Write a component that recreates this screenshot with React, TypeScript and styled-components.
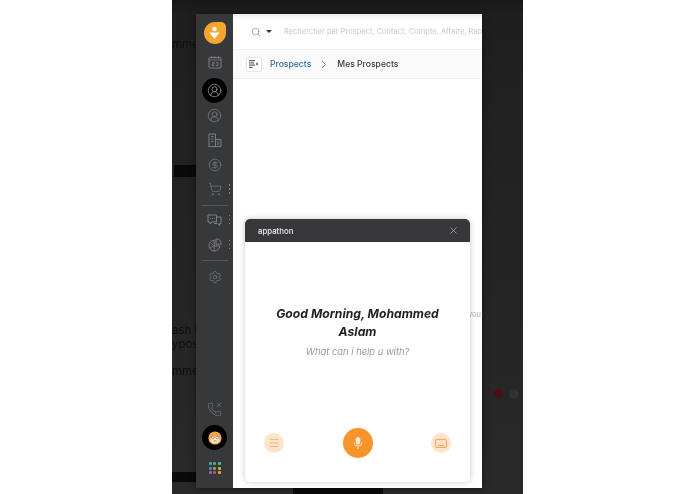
import styled, { createGlobalStyle } from "styled-components";
import { CircleDollarSign, CircleUserRound, Menu, PhoneMissed, Search, Settings, ShoppingCart, X } from "lucide-react";

const GlobalStyle = createGlobalStyle`
  html, body {
    margin: 0;
    height: 100%;
    background: #fff;
    font-family: Inter, "Liberation Sans", sans-serif;
    overflow: hidden;
  }
`;

const dots = ["#4fa3a5", "#4fa3a5", "#57b39a", "#3f86b8", "#5fae6b", "#e0a832", "#a05fb0", "#d0524f", "#e0a832"];

const App = () => {
  return (
    <Page>
      <GlobalStyle />
      <Stage>
        <Backdrop>
          <Ghost $top={37} $left={0}>mme</Ghost>
          <GhostBar $top={165} $left={2} $width={22} $height={12} />
          <Ghost $top={323} $left={0}>ash L</Ghost>
          <Ghost $top={337} $left={0}>ypost</Ghost>
          <Ghost $top={364} $left={0}>mme</Ghost>
          <GhostBar $top={472} $left={0} $width={24} $height={10} />
          <GhostBar $top={488} $left={121} $width={90} $height={6} />
          <GhostDot $top={389} $left={322} $size={9} $color="#4a1014" />
          <GhostDot $top={389} $left={337} $size={10} $color="#303431" />
          <GhostDot $top={387} $left={316} $size={4} $color="#3d1c1d" />
        </Backdrop>
        <Window>
          <Sidebar>
            <Logo>
              <svg width="13" height="14" viewBox="0 0 13 14">
                <circle cx="6.5" cy="3" r="2.2" fill="#fff" />
                <path d="M1.5 6.6h10L6.5 13z" fill="#fff" />
              </svg>
            </Logo>
            <Nav $mt={6}>
              <svg width="14" height="14" viewBox="0 0 14 14" fill="none" stroke="currentColor" strokeWidth="1">
                <rect x="1" y="2.5" width="12" height="10.5" rx="1" />
                <path d="M1 5h12M3.5 1v2.5M7 1v2.5M10.5 1v2.5M4 7.5h2.3v1.4H4v1.6h2.3M8 7.5h2v3H8" strokeWidth="0.8" />
              </svg>
            </Nav>
            <ActiveNav $mt={3}>
              <CircleUserRound size={15} strokeWidth={1.2} />
            </ActiveNav>
            <Nav>
              <CircleUserRound size={15} strokeWidth={1.2} />
            </Nav>
            <Nav>
              <svg width="14" height="14" viewBox="0 0 14 14" fill="none" stroke="currentColor" strokeWidth="1">
                <path d="M1 13.5V1h6.5v12.5M7.5 6.5h5.5v7H.5" />
                <path d="M3 3.5h2.5M3 6h2.5M3 8.5h2.5M9 9h2.5M9 11h2.5" strokeWidth="0.9" />
              </svg>
            </Nav>
            <Nav>
              <CircleDollarSign size={14} strokeWidth={1.2} />
            </Nav>
            <Nav>
              <ShoppingCart size={14} strokeWidth={1.2} />
              <More />
            </Nav>
            <Divider />
            <Nav>
              <svg width="15" height="14" viewBox="0 0 15 14" fill="none" stroke="currentColor" strokeWidth="1">
                <path d="M1 2h8.5v7H5L3 11V9H1z" />
                <path d="M10 4h4v6.5h-1.5V12.5l-2-2H7" />
                <path d="M3 5.5h.8M5 5.5h.8M7 5.5h.8" strokeWidth="1.1" />
              </svg>
              <More />
            </Nav>
            <Nav>
              <svg width="14" height="14" viewBox="0 0 14 14" fill="none" stroke="currentColor" strokeWidth="1">
                <path d="M6.2 2.2a5.4 5.4 0 1 0 5.6 5.8H6.2z" />
                <path d="M6.2 8L2.4 4.4M6.2 8l-4.6 1.8M6.2 8l.2 5" strokeWidth="0.8" />
                <path d="M8 .8a5 5 0 0 1 5.2 5.4H8z" />
              </svg>
              <More />
            </Nav>
            <Divider />
            <Nav $mt={1}>
              <Settings size={14} strokeWidth={1.2} />
            </Nav>
            <Spacer />
            <Nav>
              <PhoneMissed size={15} strokeWidth={1.1} />
            </Nav>
            <AvatarRing>
              <svg width="16" height="16" viewBox="0 0 16 16">
                <circle cx="8" cy="8" r="6.6" fill="#f5a64a" />
                <ellipse cx="8" cy="10" rx="4.6" ry="3.4" fill="#f8e3c8" />
                <circle cx="5.8" cy="7.4" r="1.3" fill="#fff" stroke="#7a4a1a" strokeWidth="0.5" />
                <circle cx="10.2" cy="7.4" r="1.3" fill="#fff" stroke="#7a4a1a" strokeWidth="0.5" />
                <path d="M6.5 11h3" stroke="#a0622a" strokeWidth="0.7" />
              </svg>
            </AvatarRing>
            <AppGrid>
              {dots.map((color, i) => (
                <AppDot key={i} style={{ background: color }} />
              ))}
            </AppGrid>
          </Sidebar>
          <Main>
            <SearchBar>
              <SearchIcon size={10} strokeWidth={1.6} color="#808080" />
              <Caret />
              <SearchText>Rechercher par Prospect, Contact, Compte, Affaire, Rap</SearchText>
            </SearchBar>
            <Crumbs>
              <ListButton>
                <svg width="10" height="8" viewBox="0 0 10 8">
                  <path d="M0 .7h6M0 2.9h5M0 5.1h6M0 7.3h3.5" stroke="#444" strokeWidth="1" />
                  <path d="M7.4 2.6L9.6 4 7.4 5.4z" fill="#444" />
                </svg>
              </ListButton>
              <CrumbLink>Prospects</CrumbLink>
              <CrumbSep>
                <svg width="6" height="9" viewBox="0 0 6 9">
                  <path d="M1 1l3.5 3.5L1 8" fill="none" stroke="#777" strokeWidth="0.9" />
                </svg>
              </CrumbSep>
              <CrumbCurrent>Mes Prospects</CrumbCurrent>
            </Crumbs>
            <Content>
              <StrayText>vou</StrayText>
            </Content>
            <Assistant>
              <AssistantHead>
                <AssistantTitle>appathon</AssistantTitle>
                <X size={11} strokeWidth={1.4} color="#c9c9c9" />
              </AssistantHead>
              <AssistantBody>
                <Greeting>Good Morning, Mohammed Aslam</Greeting>
                <Prompt>What can i help u with?</Prompt>
              </AssistantBody>
              <Actions>
                <SoftAction>
                  <Menu size={12} strokeWidth={1.2} />
                </SoftAction>
                <MicAction>
                  <svg width="10" height="14" viewBox="0 0 10 14">
                    <rect x="2.8" y="1" width="4.4" height="7.6" rx="2.2" fill="#fde8d0" />
                    <path d="M1.2 6.4a3.8 3.8 0 0 0 7.6 0M5 10.2V13" fill="none" stroke="#fde8d0" strokeWidth="1" />
                  </svg>
                </MicAction>
                <SoftAction>
                  <svg width="12" height="9" viewBox="0 0 12 9" fill="none" stroke="currentColor" strokeWidth="0.9">
                    <rect x="0.6" y="0.6" width="10.8" height="7.8" rx="0.8" />
                    <path d="M3 6.4h6" />
                  </svg>
                </SoftAction>
              </Actions>
            </Assistant>
          </Main>
        </Window>
      </Stage>
    </Page>
  );
};

const Page = styled.div`
  display: flex;
  width: 695px;
  height: 494px;
  padding-left: 172px;
  box-sizing: border-box;
  background: #fff;
  filter: blur(0.45px);
`;

const Stage = styled.div`
  position: relative;
  display: flex;
  width: 351px;
  height: 494px;
  padding: 14px 41px 6px 24px;
  box-sizing: border-box;
  background: linear-gradient(#181818 0, #1f1f1f 14px, #292929 100%);
`;

const Backdrop = styled.div`
  position: absolute;
  inset: 0;
`;

const Ghost = styled.div<{ $top: number; $left: number }>`
  position: absolute;
  top: ${(p) => p.$top}px;
  left: ${(p) => p.$left}px;
  font-size: 11.5px;
  line-height: 14px;
  white-space: nowrap;
  color: #0e0e0e;
`;

const GhostBar = styled.div<{ $top: number; $left: number; $width: number; $height: number }>`
  position: absolute;
  top: ${(p) => p.$top}px;
  left: ${(p) => p.$left}px;
  width: ${(p) => p.$width}px;
  height: ${(p) => p.$height}px;
  background: #0a0a0a;
`;

const GhostDot = styled.div<{ $top: number; $left: number; $size: number; $color: string }>`
  position: absolute;
  top: ${(p) => p.$top}px;
  left: ${(p) => p.$left}px;
  width: ${(p) => p.$size}px;
  height: ${(p) => p.$size}px;
  border-radius: 50%;
  background: ${(p) => p.$color};
`;

const Window = styled.div`
  position: relative;
  display: flex;
  width: 286px;
  height: 474px;
  box-shadow: 0 0 6px rgba(0, 0, 0, 0.5);
`;

const Sidebar = styled.div`
  display: flex;
  flex-direction: column;
  align-items: center;
  width: 37px;
  padding: 8px 0 14px;
  box-sizing: border-box;
  background: #37383a;
  color: #7d7d7d;
`;

const Logo = styled.div`
  display: flex;
  align-items: center;
  justify-content: center;
  flex: none;
  width: 22px;
  height: 22px;
  border-radius: 50% 5px 50% 50%;
  background: #f6a52e;
`;

const Nav = styled.div<{ $mt?: number }>`
  position: relative;
  display: flex;
  align-items: center;
  justify-content: center;
  flex: none;
  width: 100%;
  height: 24.75px;
  margin-top: ${(p) => p.$mt || 0}px;
`;

const ActiveNav = styled(Nav)`
  width: 25px;
  height: 25px;
  border-radius: 50%;
  background: #000;
  color: #a0a0a0;
`;

const More = styled.span`
  position: absolute;
  top: 7px;
  right: 3px;
  width: 1.5px;
  height: 1.5px;
  background: #8a8a8a;
  box-shadow: 0 4px 0 #8a8a8a, 0 8px 0 #8a8a8a;
`;

const Divider = styled.div`
  flex: none;
  width: 26px;
  height: 1px;
  margin: 3px 0 2px;
  background: #56575a;
`;

const Spacer = styled.div`
  flex: 1;
`;

const AvatarRing = styled.div`
  display: flex;
  align-items: center;
  justify-content: center;
  flex: none;
  width: 25px;
  height: 25px;
  margin-top: 3px;
  border-radius: 50%;
  background: #000;
`;

const AppGrid = styled.div`
  display: grid;
  flex: none;
  grid-template-columns: repeat(3, 3px);
  gap: 1.5px;
  margin-top: 12px;
`;

const AppDot = styled.span`
  width: 3px;
  height: 3px;
  border-radius: 1px;
`;

const Main = styled.div`
  position: relative;
  display: flex;
  flex: 1;
  flex-direction: column;
  min-width: 0;
  background: #fff;
`;

const SearchBar = styled.div`
  display: flex;
  align-items: center;
  flex: none;
  height: 36px;
  padding: 0 0 0 18px;
  background: linear-gradient(#ececec 0, #fff 6px);
  border-bottom: 1px solid #f2f2f2;
  box-sizing: border-box;
`;

const SearchIcon = styled(Search)`
  flex: none;
`;

const Caret = styled.span`
  flex: none;
  width: 0;
  height: 0;
  margin-left: 5px;
  border: 3px solid transparent;
  border-top: 3.5px solid #333;
  border-bottom: 0;
`;

const SearchText = styled.span`
  flex: none;
  margin-left: 12px;
  font-size: 7.5px;
  color: #c8c8c8;
  white-space: nowrap;
`;

const Crumbs = styled.div`
  display: flex;
  align-items: center;
  flex: none;
  height: 29px;
  padding-left: 13px;
  box-sizing: border-box;
  background: #fafafa;
  border-bottom: 1px solid #f1f1f1;
`;

const ListButton = styled.div`
  display: flex;
  align-items: center;
  justify-content: center;
  width: 16px;
  height: 15px;
  margin-right: 8px;
  background: #fff;
  border: 1px solid #e6e6e6;
  border-radius: 2px;
  box-sizing: border-box;
`;

const CrumbLink = styled.span`
  font-size: 8.6px;
  font-weight: 500;
  color: #2e6f9e;
`;

const CrumbSep = styled.span`
  display: flex;
  margin: 0 10px;
`;

const CrumbCurrent = styled.span`
  font-size: 8.6px;
  font-weight: 500;
  color: #3a3a3a;
`;

const Content = styled.div`
  display: flex;
  flex: 1;
  justify-content: flex-end;
  padding: 231px 1px 0 0;
`;

const StrayText = styled.span`
  font-size: 7.5px;
  color: #aaa;
`;

const Assistant = styled.div`
  position: absolute;
  top: 205px;
  left: 12px;
  display: flex;
  flex-direction: column;
  width: 225px;
  height: 263px;
  border-radius: 5px;
  background: #fff;
  box-shadow: 0 0 6px rgba(0, 0, 0, 0.22);
`;

const AssistantHead = styled.div`
  display: flex;
  align-items: center;
  justify-content: space-between;
  flex: none;
  height: 23px;
  padding: 0 11px 0 13px;
  border-radius: 5px 5px 0 0;
  background: #38383a;
`;

const AssistantTitle = styled.span`
  font-size: 7.8px;
  font-weight: 500;
  color: #f0f0f0;
`;

const AssistantBody = styled.div`
  display: flex;
  flex-direction: column;
  align-items: center;
  flex: 1;
  padding: 62px 20px 0;
  text-align: center;
`;

const Greeting = styled.h2`
  margin: 0;
  padding-top: 1px;
  font-size: 12.2px;
  font-weight: 700;
  font-style: italic;
  line-height: 18px;
  color: #222;
`;

const Prompt = styled.p`
  margin: 4px 0 0;
  font-size: 9.4px;
  font-style: italic;
  line-height: 14px;
  color: #9a9a9a;
`;

const Actions = styled.div`
  display: flex;
  align-items: center;
  justify-content: space-between;
  flex: none;
  height: 30px;
  margin-bottom: 24px;
  padding: 0 19px;
`;

const SoftAction = styled.div`
  display: flex;
  align-items: center;
  justify-content: center;
  width: 20px;
  height: 20px;
  border-radius: 50%;
  background: #fde4cb;
  color: #f19a44;
`;

const MicAction = styled.div`
  display: flex;
  align-items: center;
  justify-content: center;
  width: 30px;
  height: 30px;
  border-radius: 50%;
  background: #f7942a;
`;

export default App;
